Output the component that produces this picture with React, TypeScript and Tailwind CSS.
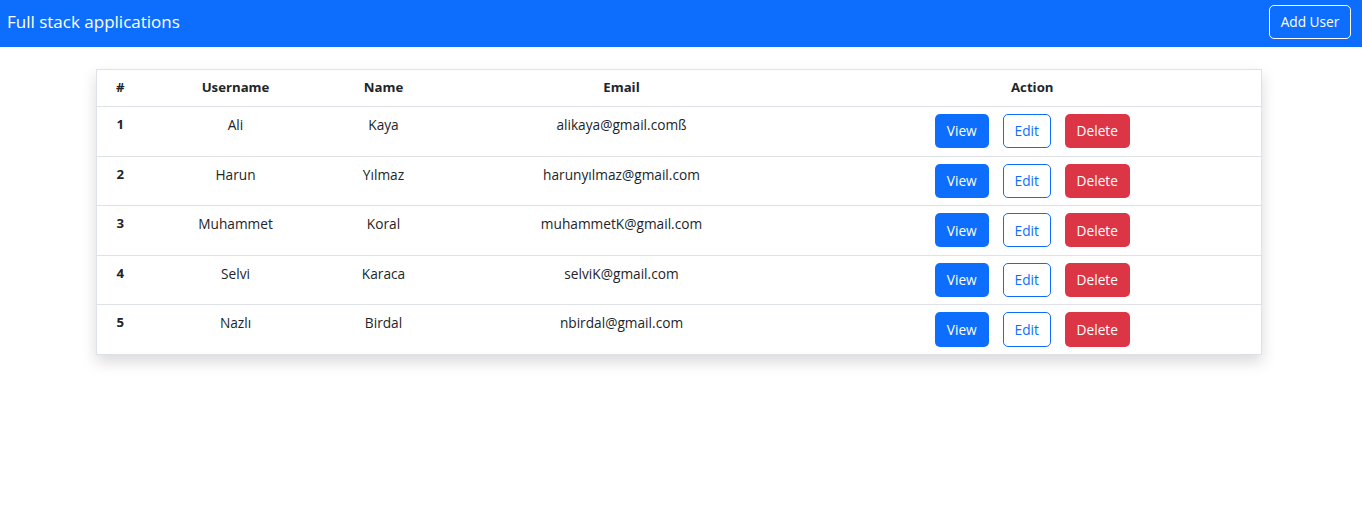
import React from "react";

const users = [
  { id: 1, username: "Ali", name: "Kaya", email: "alikaya@gmail.comß" },
  { id: 2, username: "Harun", name: "Yılmaz", email: "harunyılmaz@gmail.com" },
  { id: 3, username: "Muhammet", name: "Koral", email: "muhammetK@gmail.com" },
  { id: 4, username: "Selvi", name: "Karaca", email: "selviK@gmail.com" },
  { id: 5, username: "Nazlı", name: "Birdal", email: "nbirdal@gmail.com" },
];

export default function App() {
  return (
    <div
      className="min-h-[505px] bg-white text-[#212529]"
      style={{ fontFamily: '"Open Sans", "Noto Sans", sans-serif' }}
    >
      <nav className="flex h-[47px] items-start justify-between bg-[#0d6efd] pl-[7px] pr-[11px]">
        <span className="mt-[10px] text-[17px] leading-[24px] text-white">Full stack applications</span>
        <button className="mt-[5px] h-[34px] w-[82px] rounded-[5px] border border-white text-[13.7px] leading-[20px] text-white">
          Add User
        </button>
      </nav>
      <div className="ml-[96px] w-[1166px] pt-[22px]">
        <div className="shadow-[0_7px_14px_rgba(0,0,0,0.15)]">
          <table className="w-full table-fixed border-collapse border border-[#dee2e6] text-[13.7px] leading-[21.6px]">
            <colgroup>
              <col className="w-[47px]" />
              <col className="w-[184px]" />
              <col className="w-[112px]" />
              <col className="w-[364px]" />
              <col />
            </colgroup>
            <thead>
              <tr className="border-b border-[#dee2e6]">
                <th className="px-[7px] py-[7.2px] text-center text-[13.2px] font-bold">#</th>
                <th className="px-[7px] py-[7.2px] text-center text-[13.2px] font-bold">Username</th>
                <th className="px-[7px] py-[7.2px] text-center text-[13.2px] font-bold">Name</th>
                <th className="px-[7px] py-[7.2px] text-center text-[13.2px] font-bold">Email</th>
                <th className="px-[7px] py-[7.2px] text-center text-[13.2px] font-bold">Action</th>
              </tr>
            </thead>
            <tbody>
              {users.map((u) => (
                <tr key={u.id} className="border-b border-[#dee2e6] last:border-b-0">
                  <th className="px-[7px] py-[7.2px] text-center align-top text-[13.2px] font-bold">{u.id}</th>
                  <td className="px-[7px] py-[7.2px] text-center align-top">{u.username}</td>
                  <td className="px-[7px] py-[7.2px] text-center align-top">{u.name}</td>
                  <td className="px-[7px] py-[7.2px] text-center align-top">{u.email}</td>
                  <td className="px-[7px] py-[7.2px] align-top">
                    <div className="flex justify-center">
                      <button className="mx-[7px] h-[34.2px] w-[54px] rounded-[5px] bg-[#0d6efd] text-white">View</button>
                      <button className="mx-[7px] h-[34.2px] w-[48px] rounded-[5px] border border-[#0d6efd] text-[#0d6efd]">Edit</button>
                      <button className="mx-[7px] h-[34.2px] w-[65px] rounded-[5px] bg-[#dc3545] text-white">Delete</button>
                    </div>
                  </td>
                </tr>
              ))}
            </tbody>
          </table>
        </div>
      </div>
    </div>
  );
}
